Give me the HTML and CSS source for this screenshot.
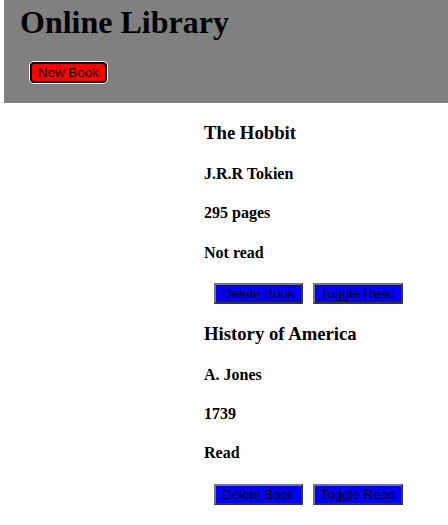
FILE: index.html
```html
<!DOCTYPE html>
<html>
<head>
<meta charset="utf-8">
<title>Online Library</title>
<link rel="stylesheet" href="styles.css">
</head>
<body>
<header class="top">
  <h1 class="title">Online Library</h1>
  <div class="top-actions">
    <button class="new-book">New Book</button>
  </div>
</header>
<main class="library">
  <div class="book">
    <h3 class="book-title">The Hobbit</h3>
    <h4 class="book-line">J.R.R Tokien</h4>
    <h4 class="book-line">295 pages</h4>
    <h4 class="book-line">Not read</h4>
    <div class="book-actions">
      <button class="blue-btn">Delete Book</button>
      <button class="blue-btn">Toggle Read</button>
    </div>
  </div>
  <div class="book">
    <h3 class="book-title">History of America</h3>
    <h4 class="book-line">A. Jones</h4>
    <h4 class="book-line">1739</h4>
    <h4 class="book-line">Read</h4>
    <div class="book-actions">
      <button class="blue-btn">Delete Book</button>
      <button class="blue-btn">Toggle Read</button>
    </div>
  </div>
</main>
</body>
</html>
```
FILE: styles.css
```css
body {
  margin: 0;
  font-family: "Liberation Serif", "Times New Roman", serif;
  color: #000;
  background: #fff;
}
.top {
  margin-left: 4px;
  background: #808080;
  padding: 4px 16px 20px;
}
.title {
  margin: 0;
  font-size: 32px;
  font-weight: bold;
}
.top-actions {
  display: flex;
  margin-top: 21px;
  padding-left: 10px;
}
.new-book {
  font-family: "Liberation Sans", Arial, sans-serif;
  font-size: 13.333px;
  padding: 1px 6px;
  background: #ff0000;
  color: #000;
  border: 2px solid #000;
  border-radius: 4px;
  box-shadow: 0 0 0 1px #fff;
}
.library {
  padding-left: 204px;
}
.book-title {
  font-size: 18.72px;
  margin: 18.72px 0;
}
.book-line {
  font-size: 16px;
  margin: 21.28px 0;
}
.book-actions {
  display: flex;
  gap: 10px;
  padding-left: 10px;
}
.blue-btn {
  font-family: "Liberation Sans", Arial, sans-serif;
  font-size: 13.333px;
  padding: 1px 6px;
  background-color: #0000ff;
  color: #000;
  border-style: solid;
  border-width: 2px;
  border-color: #767676 #333333 #333333 #767676;
}
```
